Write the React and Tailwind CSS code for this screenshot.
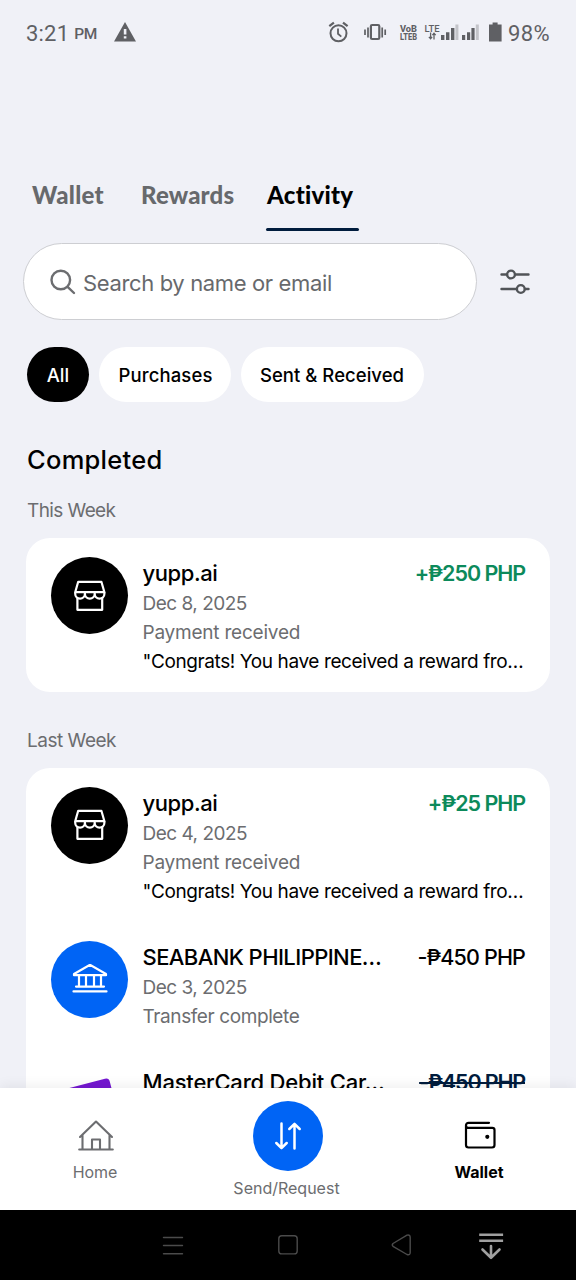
import React from 'react';

function WarningIcon() {
  return (
    <svg width="22" height="20" viewBox="0 0 22 20" className="mb-[2px] ml-[17px]">
      <path d="M11 0 L22 19.5 H0 Z" fill="#5f6064" />
      <path d="M9.8 7h2.6v5.5H9.8zM9.8 14.2h2.6v2.4H9.8z" fill="#f0f1f7" />
    </svg>
  );
}

function StatusIcons() {
  return (
    <svg width="175" height="24" viewBox="327 20 175 24" fill="none" stroke="#5f6064" className="mb-[2px]">
      <circle cx="338.5" cy="33.3" r="8" strokeWidth="2" />
      <path d="M338 28.5v5.3l3.3 2.8" strokeWidth="1.8" />
      <path d="M329.3 26.2l4.6-3.6M347.6 26.2l-4.6-3.6" strokeWidth="2.2" />
      <rect x="370.9" y="25" width="8.4" height="14" rx="1.2" strokeWidth="2.2" />
      <path d="M368 27.5v10M382.2 27.5v10" strokeWidth="1.7" />
      <path d="M365 29.5v5.5M385.2 29.5v5.5" strokeWidth="1.7" />
      <g fill="#5f6064" stroke="none" fontFamily="Roboto, sans-serif">
        <text x="400" y="31.6" fontSize="9.4" fontWeight="800" textLength="17" lengthAdjust="spacingAndGlyphs">VoB</text>
        <text x="400" y="39.8" fontSize="9.8" fontWeight="800" textLength="17" lengthAdjust="spacingAndGlyphs">LTEB</text>
        <text x="424.5" y="31.8" fontSize="9.5" fontWeight="500" textLength="15" lengthAdjust="spacingAndGlyphs">LTE</text>
        <path d="M441 35h3.4v5H441zM446 32.2h3.4V40H446zM451 28h3.4v12H451z" />
        <path d="M462 35h3.2v5H462zM467 32.2h3.2V40H467zM471.4 28h3.2v12h-3.2z" />
        <path d="M455.4 24.5h3V40h-3zM475.8 24.5h3V40h-3z" fill="#c3c4c9" />
        <path d="M489 24.4h3.6V22.6h5v1.8h4v17.2h-12.6z" />
      </g>
      <path d="M430.6 32.5v6.3M428.9 36.8l1.7 2 1.5-2M434 39.5v-6.3M432.4 35.2l1.6-2 1.7 2" strokeWidth="1.3" />
    </svg>
  );
}

function SlidersIcon() {
  return (
    <svg width="30" height="26" viewBox="0 0 30 26" fill="none" stroke="#515458" strokeWidth="2.4" strokeLinecap="round">
      <path d="M1.5 5.5H7M15.5 5.5H28.5M1.5 20H16.5M25 20H28.5" />
      <circle cx="11" cy="5.5" r="3.9" />
      <circle cx="20.8" cy="20" r="3.9" />
    </svg>
  );
}

function StoreIcon() {
  return (
    <svg width="34" height="32" viewBox="0 0 34 32" fill="none" stroke="white" strokeWidth="2.2" strokeLinejoin="round">
      <path d="M5.2 1.8H28.4L31.4 12.2H2.2Z" />
      <path d="M2.2 12.2v1.6a4.85 4.85 0 0 0 9.7 0v-1.6M11.9 12.2v1.6a4.9 4.9 0 0 0 9.8 0v-1.6M21.7 12.2v1.6a4.85 4.85 0 0 0 9.7 0v-1.6" />
      <path d="M4.4 17.5V29.8H29.2V17.5" />
    </svg>
  );
}

function BankIcon() {
  return (
    <svg width="36" height="30" viewBox="0 0 36 30" fill="none" stroke="white" strokeWidth="2.2" strokeLinejoin="round" strokeLinecap="round">
      <path d="M18 0.8L34 10V11.2H2V10Z" />
      <path d="M7 11.5V22.6M14 11.5V22.6M22 11.5V22.6M29 11.5V22.6M4 22.6H32M1.5 27.4H34.5" />
    </svg>
  );
}

function CardIcon() {
  return (
    <svg width="77" height="77" viewBox="0 0 77 77" className="shrink-0">
      <rect x="12" y="17.5" width="51" height="34" rx="4" fill="#7417d0" transform="rotate(-14.5 38 35)" />
    </svg>
  );
}

function Avatar({ kind }) {
  if (kind === 'card') return <CardIcon />;
  if (kind === 'bank') {
    return (
      <div className="flex h-[77px] w-[77px] shrink-0 items-center justify-center rounded-full bg-[#0064f5]">
        <BankIcon />
      </div>
    );
  }
  return (
    <div className="flex h-[77px] w-[77px] shrink-0 items-center justify-center rounded-full bg-black">
      <StoreIcon />
    </div>
  );
}

function Row({ kind, name, nameClass, amount, amountClass, date, status, statusClass, note }) {
  return (
    <div className="flex pt-[19px] pr-[25px] pb-4 pl-[25px]">
      <Avatar kind={kind} />
      <div className="ml-[14.5px] min-w-0 flex-1">
        <div className="flex h-8 items-center justify-between text-[22px] leading-8 font-medium whitespace-nowrap">
          <span className={nameClass}>{name}</span>
          <span className={amountClass}>{amount}</span>
        </div>
        <div className="h-[29px] text-[19px] leading-[29px] tracking-[-0.5px] text-[#6c6d70]">{date}</div>
        {status && <div className={statusClass}>{status}</div>}
        {note && <div className="h-[29px] text-[19px] leading-[29px] tracking-[-0.4px] whitespace-nowrap text-black">{note}</div>}
      </div>
    </div>
  );
}

const NOTE = '"Congrats! You have received a reward fro…';
const RECEIVED = 'h-[29px] text-[19px] leading-[29px] tracking-[-0.22px] text-[#6c6d70]';
const TRANSFER = 'h-[29px] text-[19px] leading-[29px] tracking-[-0.4px] text-[#6c6d70]';

export default function App() {
  return (
    <div className="flex h-[1280px] w-[576px] flex-col overflow-hidden bg-[#f0f1f7] font-['Inter',sans-serif] text-black">
      <header className="flex h-[66px] shrink-0 items-center justify-between pr-[26px] pl-[26px] font-['Roboto',sans-serif] text-[#5f6064]">
        <div className="flex items-center">
          <span className="text-[22px] tracking-[0.2px]">3:21</span>
          <span className="mt-[4px] ml-[5px] text-[15.5px] font-medium tracking-[-0.5px]">PM</span>
          <WarningIcon />
        </div>
        <div className="flex items-center">
          <StatusIcons />
          <span className="ml-[6px] text-[22px] tracking-[0.35px]">98%</span>
        </div>
      </header>

      <main className="min-h-0 flex-1 overflow-hidden">
        <nav className="mt-[111px] flex h-[54px] pl-8 font-['Lato',sans-serif] text-[24px] leading-9 font-black text-[#67696c]">
          <div className="w-[109px] tracking-[0.3px]">Wallet</div>
          <div className="w-[125px] tracking-[0.15px]">Rewards</div>
          <div className="flex w-[93px] flex-col justify-between">
            <span className="pl-px tracking-[0.25px] text-black">Activity</span>
            <span className="h-[3px] rounded-full bg-[#001c3d]" />
          </div>
        </nav>

        <div className="mt-3 flex items-center pl-[22.5px]">
          <div className="flex h-[77px] w-[454px] items-center rounded-full border-[1.5px] border-[#cdced2] bg-white pl-[26px]">
            <svg width="26" height="26" viewBox="0 0 26 26" fill="none" stroke="#6c6d70" strokeWidth="2.4" strokeLinecap="round">
              <circle cx="10.8" cy="11" r="9.3" />
              <path d="M17.6 17.8L24 24" />
            </svg>
            <span className="mt-[3px] ml-[7.5px] text-[22px] tracking-[-0.36px] text-[#67696c]">Search by name or email</span>
          </div>
          <div className="ml-[23.5px]">
            <SlidersIcon />
          </div>
        </div>

        <div className="mt-[27px] flex gap-[10px] pl-[27px] text-[18.5px] font-medium">
          <div className="flex h-[55px] w-[62px] items-center justify-center rounded-full bg-black text-white"><span className="mt-[3px] tracking-[0.1px]">All</span></div>
          <div className="flex h-[55px] w-[132px] items-center justify-center rounded-full bg-white"><span className="mt-[3px] ml-px tracking-[0.13px]">Purchases</span></div>
          <div className="flex h-[55px] w-[183px] items-center justify-center rounded-full bg-white"><span className="mt-[3px] mr-px tracking-[0.03px]">Sent &amp; Received</span></div>
        </div>

        <h1 className="mt-[40px] ml-[27px] h-9 text-[25.5px] leading-9 font-medium tracking-[0.27px]">Completed</h1>
        <h2 className="mt-[18px] ml-[27px] h-[29px] text-[19px] leading-[29px] tracking-[-0.6px] text-[#6c6d70]">This Week</h2>
        <section className="mt-[13px] ml-[26px] h-[154px] w-[524px] rounded-[24px] bg-white">
          <Row kind="store" name="yupp.ai" nameClass="tracking-[-0.4px]" amount="+₱250 PHP" amountClass="text-[#0c8a5b] text-[21.5px] font-semibold tracking-[-1.05px]" date="Dec 8, 2025" status="Payment received" statusClass={RECEIVED} note={NOTE} />
        </section>
        <h2 className="mt-[34px] ml-[27px] h-[29px] text-[19px] leading-[29px] tracking-[-0.48px] text-[#6c6d70]">Last Week</h2>
        <section className="mt-[12.5px] ml-[26px] flex w-[524px] flex-col rounded-[24px] bg-white">
          <Row kind="store" name="yupp.ai" nameClass="tracking-[-0.4px]" amount="+₱25 PHP" amountClass="text-[#0c8a5b] text-[21.5px] font-semibold tracking-[-1.05px]" date="Dec 4, 2025" status="Payment received" statusClass={RECEIVED} note={NOTE} />
          <Row kind="bank" name="SEABANK PHILIPPINE…" nameClass="tracking-[-0.58px]" amount="-₱450 PHP" amountClass="text-[21.5px] tracking-[-0.85px]" date="Dec 3, 2025" status="Transfer complete" statusClass={TRANSFER} />
          <Row kind="card" name="MasterCard Debit Car…" nameClass="tracking-[-0.2px]" amount="-₱450 PHP" amountClass="text-[#001c3d] text-[21.5px] font-semibold tracking-[-1.15px] line-through" />
        </section>
      </main>

      <nav className="relative flex h-[122px] shrink-0 bg-white text-[16px] text-[#6c6d70] shadow-[0_-2px_12px_rgba(0,0,0,0.07)]">
        <div className="flex w-[190px] flex-col items-center pt-8">
          <svg width="36" height="31" viewBox="0 0 36 31" fill="none" stroke="#6c6d70" strokeWidth="2.1" strokeLinecap="round" strokeLinejoin="round" className="ml-[2px]">
            <path d="M2 17L18 1.5L34 17M4.5 15V29M31.5 15V29M1.2 29.5H34.8M14 29V19.5H22V29" />
          </svg>
          <span className="mt-[9px] leading-6 tracking-[-0.1px]">Home</span>
        </div>
        <div className="flex w-[196px] flex-col items-center pt-[13px]">
          <div className="flex h-[70px] w-[70px] items-center justify-center rounded-full bg-[#0064f5]">
            <svg width="28" height="28" viewBox="0 0 28 28" fill="none" stroke="white" strokeWidth="2.5" strokeLinecap="round" strokeLinejoin="round">
              <path d="M7.5 1.5V26M2.3 21L7.5 26.2L12.7 21M20.5 26.5V2M15.3 7L20.5 1.8L25.7 7" />
            </svg>
          </div>
          <span className="mt-[5px] mr-[3px] leading-6">Send/Request</span>
        </div>
        <div className="flex w-[186px] flex-col items-center pt-8 text-black">
          <svg width="32" height="31" viewBox="0 0 32 31" fill="none" stroke="black" strokeWidth="2.2" strokeLinecap="round" strokeLinejoin="round" className="ml-[2px]">
            <path d="M25 2.8H4.5A2.5 2.5 0 0 0 2 5.3V25A2.5 2.5 0 0 0 4.5 27.5H28A2.5 2.5 0 0 0 30.5 25V10A2.2 2.2 0 0 0 28.3 7.8H4.3A2.3 2.3 0 0 1 2 5.5" />
            <circle cx="23.3" cy="16.8" r="1" fill="black" />
          </svg>
          <span className="mt-[9px] leading-6 font-bold">Wallet</span>
        </div>
      </nav>

      <footer className="h-[70px] shrink-0 bg-black">
        <svg width="576" height="70" viewBox="0 1210 576 70" fill="none" strokeLinecap="round" strokeLinejoin="round">
          <g stroke="#4b4b4b" strokeWidth="1.4">
            <path d="M163.5 1237.5H182.5M163.5 1245.5H182.5M163.5 1253.7H182.5" />
            <rect x="278.8" y="1235.7" width="18.4" height="18.2" rx="3" />
            <path d="M393 1243.5L407 1235.2Q410.2 1234.3 410.2 1237.5V1252.5Q410.2 1255.5 407 1254.5L393 1246.3Q391.6 1244.9 393 1243.5Z" />
          </g>
          <g stroke="#a0a0a0" strokeWidth="2.6">
            <path d="M480.5 1234.7H501.8M480.5 1240.7H501.8" strokeLinecap="square" />
            <path d="M491 1246V1257.5M482.5 1249.5L491 1257.8L499.5 1249.5" />
          </g>
        </svg>
      </footer>
    </div>
  );
}
